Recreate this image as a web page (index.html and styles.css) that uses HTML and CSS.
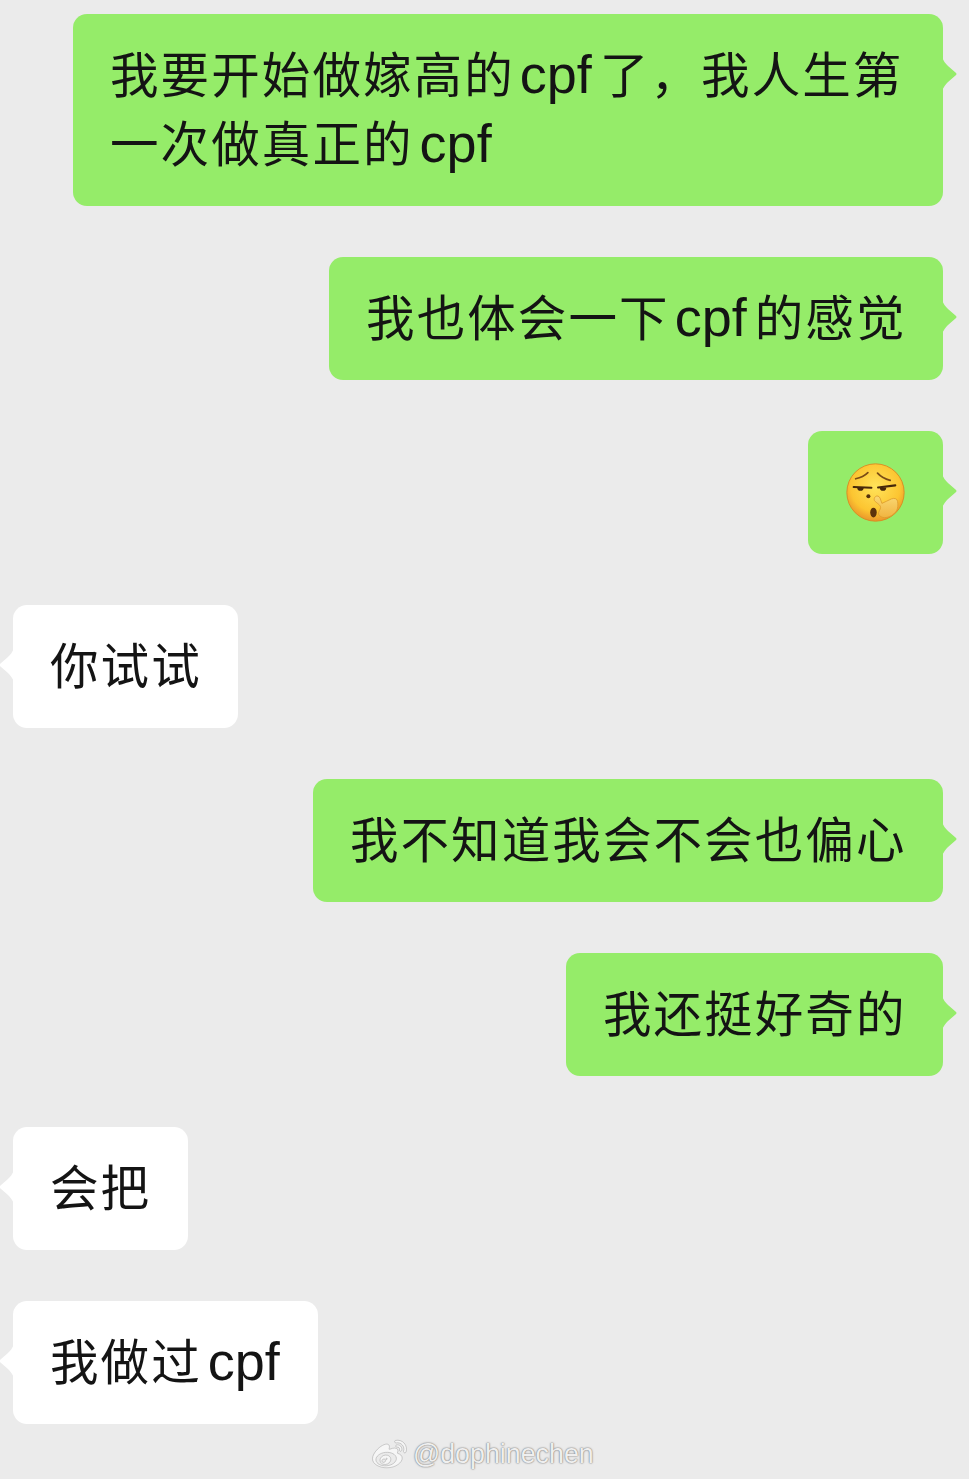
FILE: index.html
```html
<!DOCTYPE html>
<html lang="zh-CN">
<head>
  <meta charset="UTF-8" />
  <title>Chat</title>
  <link rel="stylesheet" href="styles.css">
</head>
<body>
  <div class="chat">
    <div class="row row-me">
      <div class="bubble">我要开始做嫁高的<span class="latin">cpf</span>了，我人生第一次做真正的<span class="latin latin-end">cpf</span></div>
    </div>
    <div class="row row-me">
      <div class="bubble">我也体会一下<span class="latin">cpf</span>的感觉</div>
    </div>
    <div class="row row-me">
      <div class="bubble bubble-emoji">
        <svg class="emoji" viewBox="0 0 60 60" aria-label="emoji">
          <defs>
            <radialGradient id="face" cx="50%" cy="40%" r="60%">
              <stop offset="0" stop-color="#ffe35a" />
              <stop offset="0.72" stop-color="#fcc531" />
              <stop offset="1" stop-color="#ea962a" />
            </radialGradient>
            <linearGradient id="hand" x1="0" y1="0" x2="0" y2="1">
              <stop offset="0" stop-color="#fad873" />
              <stop offset="1" stop-color="#f0b440" />
            </linearGradient>
          </defs>
          <circle cx="30" cy="30" r="28.2" fill="url(#face)" stroke="#d98a22" stroke-width="0.9" />
          <path d="M10.5 16.5Q18 15 22.5 10.5M32 11Q36.5 16 44.5 18" fill="none" stroke="#7a4c16" stroke-width="1.7" stroke-linecap="round" />
          <path d="M8.5 24.6L26 25.3M32.5 25L49.5 23" fill="none" stroke="#46280a" stroke-width="2" stroke-linecap="round" />
          <path d="M12 25h6.4a3.2 3.4 0 0 1-6.4 0zM34.2 25h6.4a3.2 3.4 0 0 1-6.4 0z" fill="#46280a" />
          <circle cx="23" cy="33.7" r="2" fill="#54300a" />
          <ellipse cx="28" cy="49.7" rx="3.2" ry="4.8" fill="#5e340c" />
          <path d="M30 34C31.5 32.8 33.5 33.5 34.5 35.5L36.3 40.7C39.5 39.5 42.5 37.5 45.7 36.3C48.5 35.2 51.5 36 51.7 38.7C52.4 42 52 45.5 50.7 48C48 52 43.5 54.7 39 54.7C36.5 54.7 34 53.5 33 51.3C32.5 49 34.8 47 35 44.7C35 42 31 40.5 29 38C28.4 36.5 28.8 35 30 34Z" fill="url(#hand)" stroke="#dc9a2c" stroke-width="0.8" />
        </svg>
      </div>
    </div>
    <div class="row row-them">
      <div class="bubble">你试试</div>
    </div>
    <div class="row row-me">
      <div class="bubble">我不知道我会不会也偏心</div>
    </div>
    <div class="row row-me">
      <div class="bubble">我还挺好奇的</div>
    </div>
    <div class="row row-them">
      <div class="bubble">会把</div>
    </div>
    <div class="row row-them">
      <div class="bubble">我做过<span class="latin latin-end">cpf</span></div>
    </div>
  </div>

  <div class="watermark">
    <svg class="weibo" viewBox="0 0 24 24" aria-hidden="true">
      <path d="M10.098 20.323c-3.977.391-7.414-1.406-7.672-4.02-.259-2.609 2.759-5.047 6.74-5.441 3.979-.394 7.413 1.404 7.671 4.018.259 2.6-2.759 5.049-6.737 5.439l-.002.004zM9.05 17.219c-.384.616-1.208.884-1.829.602-.612-.279-.793-.991-.406-1.593.379-.595 1.176-.861 1.793-.601.622.263.82.972.442 1.592zm1.27-1.627c-.141.237-.449.353-.689.253-.236-.09-.313-.361-.177-.586.138-.227.436-.346.672-.24.239.09.315.36.18.601l.014-.028zm.176-2.719c-1.893-.493-4.033.45-4.857 2.118-.836 1.704-.026 3.591 1.886 4.21 1.983.64 4.318-.341 5.132-2.179.8-1.793-.201-3.642-2.161-4.149zm7.563-1.224c-.346-.105-.57-.18-.405-.615.375-.977.42-1.804 0-2.404-.781-1.112-2.915-1.053-5.364-.03 0 0-.766.331-.571-.271.376-1.217.315-2.224-.27-2.809-1.338-1.337-4.869.045-7.888 3.08C1.309 10.87 0 13.273 0 15.348c0 3.981 5.099 6.395 10.086 6.395 6.536 0 10.888-3.801 10.888-6.82 0-1.822-1.547-2.854-2.915-3.284v.01zm1.908-5.092c-.766-.856-1.908-1.187-2.96-.962-.436.09-.706.511-.616.932.09.42.511.691.932.602.511-.105 1.067.044 1.442.465.376.421.466.977.316 1.473-.136.406.089.856.51.992.405.119.857-.105.992-.512.33-1.021.12-2.178-.646-3.035l.03.045zm2.418-2.195c-1.576-1.757-3.905-2.419-6.054-1.968-.496.104-.812.587-.706 1.081.104.496.586.813 1.082.707 1.532-.331 3.185.15 4.296 1.383 1.112 1.246 1.429 2.943.947 4.416-.165.48.106 1.007.586 1.157.479.165.991-.104 1.157-.586.675-2.088.241-4.478-1.338-6.235l.03.045z" />
    </svg>
    <span class="handle">@dophinechen</span>
  </div>
</body>
</html>
```

FILE: styles.css
```css
* {
  box-sizing: border-box;
}

html,
body {
  height: 100%;
}

body {
  margin: 0;
  position: relative;
  overflow: hidden;
  background: #ebebeb;
  color: #141414;
  font-family: "Liberation Sans", "Noto Sans CJK SC", sans-serif;
}

.chat {
  display: flex;
  flex-direction: column;
  gap: 51px;
  padding: 14px 26px 0 13px;
}

.row {
  display: flex;
}

.row-me {
  justify-content: flex-end;
}

.row-them {
  justify-content: flex-start;
}

.bubble {
  position: relative;
  max-width: 870px;
  padding: 28px 36.5px 26px 37px;
  border-radius: 14px;
  font-size: 48.5px;
  letter-spacing: 2.1px;
  line-height: 69px;
}

.row-me .bubble {
  background: #95ec69;
}

.row-them .bubble {
  background: #fff;
}

/* tail with slightly hollow flanks */
.bubble::after {
  content: "";
  position: absolute;
  top: 42px;
  width: 15px;
  height: 36px;
  background: inherit;
  clip-path: path("M0 0C1 5 4 8 6 10L13.5 16.5Q15.5 18 13.5 19.5L6 26C4 28 1 31 0 36Z");
}

.row-me .bubble::after {
  right: -14px;
}

.row-them .bubble::after {
  left: -14px;
  transform: scaleX(-1);
}

.latin {
  margin: 0 8px 0 5px;
  font-size: 54px;
  letter-spacing: 0;
  line-height: 1;
}

.latin-end {
  margin: 0 2px 0 6px;
}

.bubble-emoji {
  display: flex;
  align-items: center;
  height: 123px;
  padding: 0 37px;
}

.emoji {
  display: block;
  width: 61px;
  height: 61px;
}

.watermark {
  position: absolute;
  left: 371px;
  top: 1437px;
  display: flex;
  align-items: center;
  gap: 5px;
  height: 34px;
}

.weibo {
  width: 37px;
  height: 34px;
  fill: #f6f6f6;
  stroke: #8f8f8f;
  stroke-width: 0.3;
}

.handle {
  font-size: 26.8px;
  color: #efefef;
  text-shadow: 0 0 2px #777, 0 0 1px #888;
}
```
